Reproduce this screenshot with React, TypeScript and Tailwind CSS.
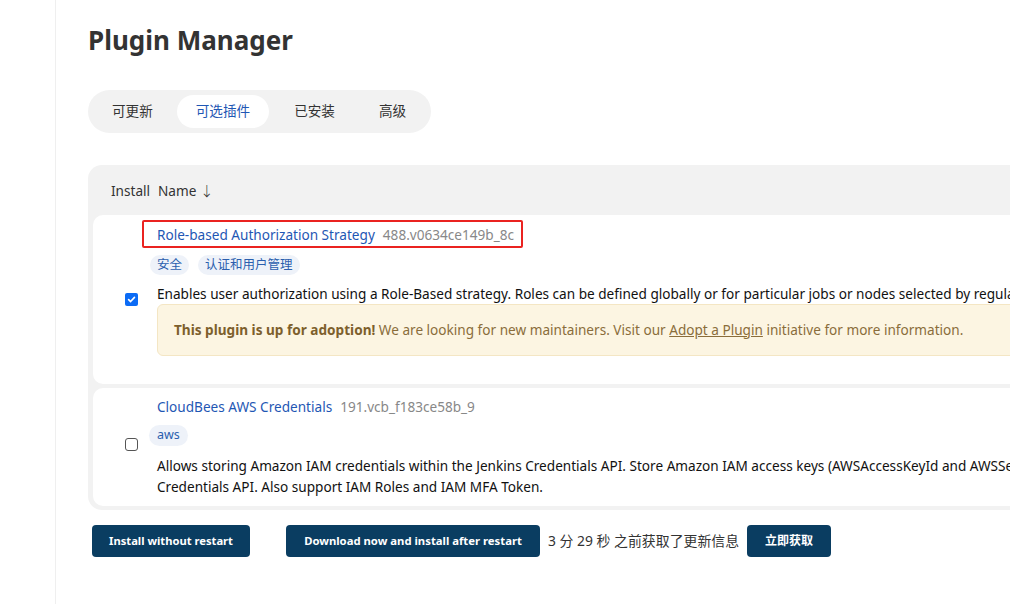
import React from "react";

const font = { fontFamily: '"Noto Sans", "Noto Sans CJK SC", sans-serif' };

function Tag({ children }: { children: React.ReactNode }) {
  return (
    <span className="inline-flex h-[20px] items-center rounded-full bg-[#eef2f9] px-[7px] text-[12.5px] text-[#2b5fae]">
      {children}
    </span>
  );
}

function CheckBox({ checked }: { checked: boolean }) {
  if (checked) {
    return (
      <span className="flex h-[13px] w-[13px] items-center justify-center rounded-[2px] bg-[#0b6bf5]">
        <svg width="9" height="9" viewBox="0 0 10 10">
          <path d="M1.8 5.2 L4 7.3 L8.3 2.6" stroke="white" strokeWidth="1.8" fill="none" strokeLinecap="round" strokeLinejoin="round" />
        </svg>
      </span>
    );
  }
  return <span className="block h-[13px] w-[13px] rounded-[3px] border border-[#555] bg-white" />;
}

export default function App() {
  return (
    <div className="flex h-[604px] w-[1010px] overflow-hidden bg-white text-[#1a1a1a]" style={font}>
      <div className="w-[56px] shrink-0 border-r border-[#efefef]" />
      <div className="min-w-0 flex-1 pl-[32px]">
        <h1 className="mt-[24px] text-[26px] font-bold leading-[32px] text-[#333]">Plugin Manager</h1>
        <div className="mt-[34px] inline-flex h-[43px] items-center gap-[5px] rounded-full bg-[#f2f2f2] pl-[5px] pr-[6px]">
          <span className="px-[19px] text-[13.6px] text-[#333]">可更新</span>
          <span className="flex h-[33px] items-center rounded-full bg-white px-[19px] text-[13.6px] text-[#1f57b4]">可选插件</span>
          <span className="pl-[20px] pr-[19px] text-[13.6px] text-[#333]">已安装</span>
          <span className="pl-[20px] pr-[19px] text-[13.6px] text-[#333]">高级</span>
        </div>

        <div className="mt-[32px] w-[940px] rounded-[14px] bg-[#f2f2f2] px-[5px] pb-[4px]">
          <div className="flex h-[50px] items-center pt-[2px] text-[13.6px] text-[#333]">
            <span className="ml-[18px] w-[41px]">Install</span>
            <span className="ml-[6px]">Name <span className="font-light">↓</span></span>
          </div>
          <div className="flex flex-col gap-[4px]">
            {/* Row 1 */}
            <div className="flex items-center rounded-[10px] bg-white pb-[28px] pt-[9px]">
              <div className="ml-[18px] flex w-[40px] justify-center pt-[19px]">
                <CheckBox checked />
              </div>
              <div className="ml-[6px] min-w-0 flex-1">
                <div className="relative whitespace-nowrap text-[13.6px] leading-[21px]">
                  <span className="text-[#1f57b4]">Role-based Authorization Strategy</span>
                  <span className="ml-[8px] text-[#888]">488.v0634ce149b_8c</span>
                  <span className="absolute -left-[15px] -top-[4px] h-[28px] w-[381px] rounded-[2px] border-2 border-[#ea2320]" />
                </div>
                <div className="-ml-[7px] mt-[10px] flex gap-[9px]">
                  <Tag>安全</Tag>
                  <Tag>认证和用户管理</Tag>
                </div>
                <div className="mt-[8px] whitespace-nowrap text-[13.6px] leading-[21px] text-[#111]">
                  Enables user authorization using a Role-Based strategy. Roles can be defined globally or for particular jobs or nodes selected by regular expressions.
                </div>
                <div className="flex h-[52px] items-center whitespace-nowrap rounded-[6px] border border-[#f4e6c4] bg-[#fcf5e2] pl-[16px] text-[13.6px] text-[#8a6d3b]">
                  <span className="font-bold text-[#7d5f2c]">This plugin is up for adoption!</span>
                  <span>&nbsp;We are looking for new maintainers. Visit our&nbsp;</span>
                  <span className="underline">Adopt a Plugin</span>
                  <span>&nbsp;initiative for more information.</span>
                </div>
              </div>
            </div>
            {/* Row 2 */}
            <div className="flex items-center rounded-[10px] bg-white pb-[9px] pt-[8px]">
              <div className="ml-[18px] flex w-[40px] justify-center pb-[4px]">
                <CheckBox checked={false} />
              </div>
              <div className="ml-[6px] min-w-0 flex-1">
                <div className="whitespace-nowrap text-[13.6px] leading-[21px]">
                  <span className="text-[#1f57b4]">CloudBees AWS Credentials</span>
                  <span className="ml-[8px] text-[#888]">191.vcb_f183ce58b_9</span>
                </div>
                <div className="-ml-[8px] mt-[8px] flex">
                  <span className="inline-flex h-[21px] items-center rounded-full bg-[#eef2f9] px-[8px] text-[12.5px] text-[#2b5fae]">aws</span>
                </div>
                <div className="mt-[9px] text-[13.6px] leading-[21px] text-[#111]">
                  <div className="whitespace-nowrap">Allows storing Amazon IAM credentials within the Jenkins Credentials API. Store Amazon IAM access keys (AWSAccessKeyId and AWSSecretKey) within the Jenkins</div>
                  <div className="whitespace-nowrap">Credentials API. Also support IAM Roles and IAM MFA Token.</div>
                </div>
              </div>
            </div>
          </div>
        </div>

        <div className="ml-[4px] mt-[15px] flex items-center">
          <button className="h-[32px] w-[158px] rounded-[4px] bg-[#0a3d61] text-[11.2px] font-bold text-white">Install without restart</button>
          <button className="ml-[36px] h-[32px] w-[254px] rounded-[4px] bg-[#0a3d61] text-[11.3px] font-bold text-white">Download now and install after restart</button>
          <span className="ml-[8px] text-[13.9px] text-[#333]">3 分 29 秒 之前获取了更新信息</span>
          <button className="ml-[8px] h-[32px] w-[84px] rounded-[4px] bg-[#0a3d61] text-[12px] font-bold text-white">立即获取</button>
        </div>
      </div>
    </div>
  );
}
